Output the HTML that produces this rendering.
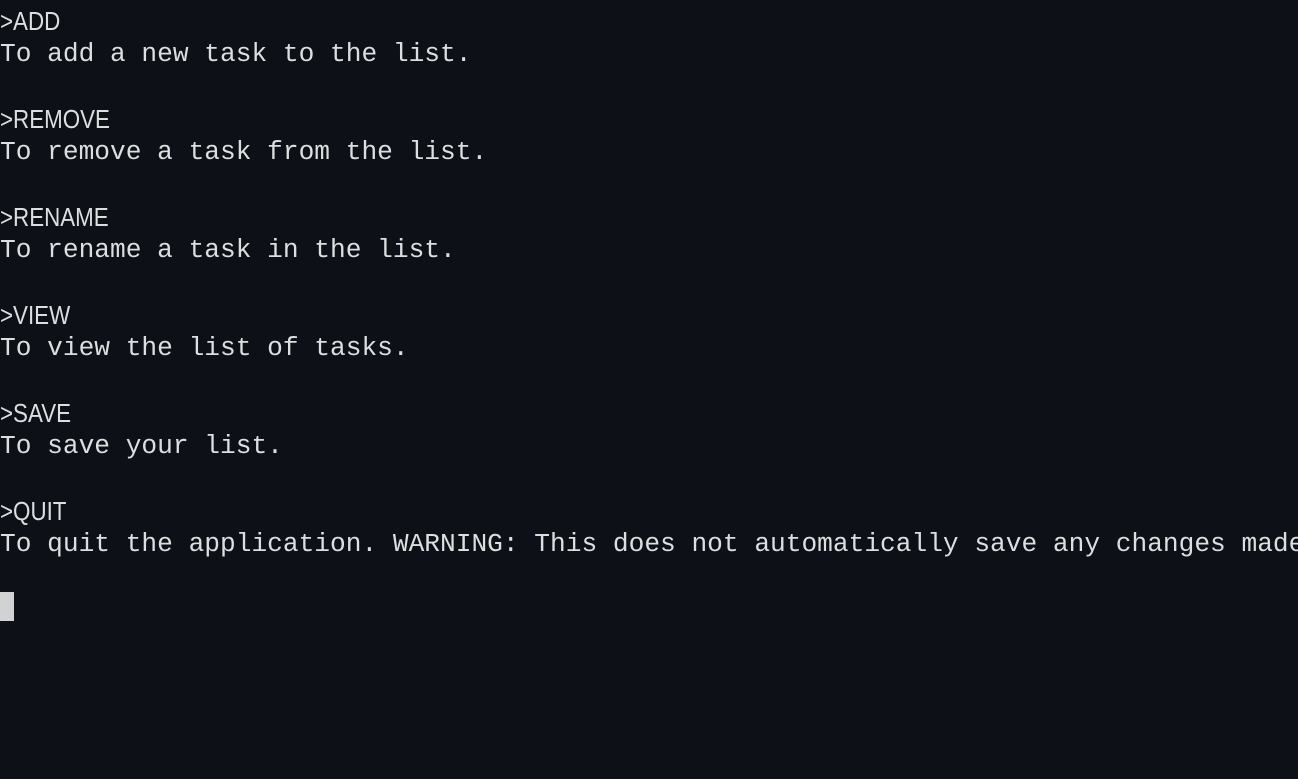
<!DOCTYPE html>
<html><head><style>
html,body{margin:0;padding:0;background:#0d1117;width:1298px;height:779px;overflow:hidden}
.l{position:absolute;left:0;white-space:pre;color:#dcdee0;line-height:32px}
.h{font-family:"Liberation Sans",sans-serif;font-size:26px;transform:scaleX(0.86);transform-origin:left}
.m{font-family:"Liberation Mono",monospace;font-size:26.2px}
.c{position:absolute;left:0;top:592px;width:14px;height:29px;background:#d0d2d4}
</style></head><body>
<div class="l h" style="top:5px">&gt;ADD</div>
<div class="l m" style="top:38px">To add a new task to the list.</div>
<div class="l h" style="top:103px">&gt;REMOVE</div>
<div class="l m" style="top:136px">To remove a task from the list.</div>
<div class="l h" style="top:201px">&gt;RENAME</div>
<div class="l m" style="top:234px">To rename a task in the list.</div>
<div class="l h" style="top:299px">&gt;VIEW</div>
<div class="l m" style="top:332px">To view the list of tasks.</div>
<div class="l h" style="top:397px">&gt;SAVE</div>
<div class="l m" style="top:430px">To save your list.</div>
<div class="l h" style="top:495px">&gt;QUIT</div>
<div class="l m" style="top:528px">To quit the application. WARNING: This does not automatically save any changes made.</div>
<div class="c"></div>
</body></html>
